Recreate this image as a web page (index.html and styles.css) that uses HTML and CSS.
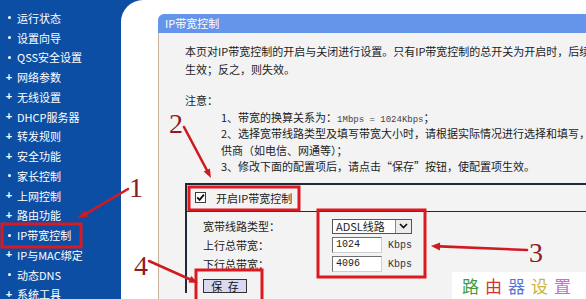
FILE: index.html
```html
<!DOCTYPE html>
<html lang="zh">
<head>
<meta charset="utf-8">
<title>IP带宽控制</title>
<link rel="stylesheet" href="styles.css">
</head>
<body>
<div class="page">
  <nav class="sidebar">
    <ul class="menu">
      <li><span class="mark dot"></span>运行状态</li>
      <li><span class="mark dot"></span>设置向导</li>
      <li><span class="mark dot"></span>QSS安全设置</li>
      <li><span class="mark plus">+</span>网络参数</li>
      <li><span class="mark plus">+</span>无线设置</li>
      <li><span class="mark plus">+</span>DHCP服务器</li>
      <li><span class="mark plus">+</span>转发规则</li>
      <li><span class="mark plus">+</span>安全功能</li>
      <li><span class="mark dot"></span>家长控制</li>
      <li><span class="mark plus">+</span>上网控制</li>
      <li><span class="mark plus">+</span>路由功能</li>
      <li><span class="mark dot"></span>IP带宽控制</li>
      <li><span class="mark plus">+</span>IP与MAC绑定</li>
      <li><span class="mark dot"></span>动态DNS</li>
      <li><span class="mark plus">+</span>系统工具</li>
    </ul>
  </nav>
  <main class="content">
    <section class="panel">
      <h1 class="panel-title">IP带宽控制</h1>
      <div class="panel-body">
        <div class="intro">
          <div class="line">本页对IP带宽控制的开启与关闭进行设置。只有IP带宽控制的总开关为开启时，后续的IP带宽控制规则才能</div>
          <div class="line">生效；反之，则失效。</div>
        </div>
        <p class="note-title">注意：</p>
        <div class="notes">
          <div class="line">1、带宽的换算关系为：<span class="small">1Mbps = 1024Kbps</span>；</div>
          <div class="line">2、选择宽带线路类型及填写带宽大小时，请根据实际情况进行选择和填写，如有疑问，请咨询您的带宽提</div>
          <div class="line">供商（如电信、网通等）；</div>
          <div class="line">3、修改下面的配置项后，请点击“保存”按钮，使配置项生效。</div>
        </div>
        <div class="form-box">
          <div class="enable-row">
            <span class="checkbox"><svg width="9" height="9" viewBox="0 0 9 9"><path d="M1.2 4.4 L3.6 6.9 L7.9 1.6" fill="none" stroke="#111" stroke-width="1.8"/></svg></span>
            <span>开启IP带宽控制</span>
          </div>
          <div class="form-grid">
            <div class="label">宽带线路类型：</div>
            <div class="ctrl">
              <div class="select"><span class="select-value">ADSL线路</span><span class="select-btn"><svg width="9" height="6" viewBox="0 0 9 6"><path d="M1 1 L4.5 4.6 L8 1" fill="none" stroke="#111" stroke-width="1.7"/></svg></span></div>
            </div>
            <div class="label">上行总带宽：</div>
            <div class="ctrl"><span class="input">1024</span><span class="unit">Kbps</span></div>
            <div class="label">下行总带宽：</div>
            <div class="ctrl"><span class="input">4096</span><span class="unit">Kbps</span></div>
          </div>
          <div class="actions"><button class="btn" type="button">保 存</button></div>
        </div>
      </div>
    </section>
  </main>

  <svg class="annotations" width="586" height="299" viewBox="0 0 586 299">
    <g fill="none" stroke="#dc1820" stroke-width="3">
      <rect x="2" y="224" width="79" height="23"/>
      <rect x="189" y="187" width="110" height="23"/>
      <rect x="318" y="210" width="107" height="67"/>
      <rect x="196" y="270" width="66" height="32"/>
    </g>
    <g stroke="#d01a22" stroke-width="2.6" stroke-linecap="round">
      <line x1="128" y1="189" x2="86.7" y2="213.4"/>
      <line x1="184" y1="127" x2="206.8" y2="170"/>
      <line x1="527" y1="250" x2="440" y2="246.4"/>
      <line x1="149" y1="261" x2="189.8" y2="279.3"/>
    </g>
    <g fill="#d01a22">
      <polygon points="77,218 88.5,216.4 84.9,210.4"/>
      <polygon points="211,178 203.7,171.6 209.9,168.4"/>
      <polygon points="431,246 440.1,242.4 439.9,250.4"/>
      <polygon points="198,283 188.4,282.5 191.2,276.1"/>
    </g>
    <g class="num" fill="#8e1c22">
      <text x="129" y="197">1</text>
      <text x="169" y="133">2</text>
      <text x="529" y="262">3</text>
      <text x="134" y="275">4</text>
    </g>
  </svg>

  <div class="watermark">
    <span class="w1">路</span><span class="w2">由</span><span class="w3">器</span><span class="w4">设</span><span class="w5">置</span>
  </div>
</div>
</body>
</html>
```

FILE: styles.css
```css
html, body {
  margin: 0;
  padding: 0;
  width: 586px;
  height: 299px;
  overflow: hidden;
}

body {
  font-family: "Noto Sans CJK SC", "Noto Sans", sans-serif;
  font-size: 11px;
  color: #1c1c1c;
}

.page {
  position: relative;
  display: flex;
  width: 586px;
  height: 299px;
  background: #0c4ea3;
}

/* sidebar */
.sidebar {
  flex: none;
  width: 121px;
}

.menu {
  list-style: none;
  margin: 0;
  padding: 8px 0 0 0;
}

.menu li {
  display: flex;
  align-items: center;
  height: 19.75px;
  padding-left: 5px;
  color: #fff;
  white-space: nowrap;
}

.mark {
  width: 8px;
  margin-right: 4px;
  display: flex;
  justify-content: center;
  align-items: center;
}

.dot::before {
  content: "";
  display: block;
  width: 3px;
  height: 3px;
  border-radius: 50%;
  background: #fff;
}

.plus {
  font-family: "Liberation Sans", sans-serif;
  font-weight: bold;
  font-size: 11px;
  line-height: 11px;
}

/* content */
.content {
  flex: 1;
  min-width: 0;
  background: #fff;
  border-top-left-radius: 22px;
  padding: 14px 0 0 37px;
  overflow: hidden;
}

.panel {
  width: 520px;
  height: 100%;
  display: flex;
  flex-direction: column;
}

.panel-title {
  margin: 0;
  height: 19px;
  line-height: 19px;
  padding-left: 7px;
  background: #6595ea;
  color: #fff;
  font-size: 11px;
  font-weight: normal;
  border-top-left-radius: 6px;
}

.panel-body {
  flex: 1;
  background: #f3f3f3;
  border-left: 1px solid #c9b49b;
  padding: 9px 0 0 26px;
}

.line {
  white-space: nowrap;
  overflow: visible;
}

.intro .line {
  height: 18px;
  line-height: 18px;
}

.note-title {
  margin: 13.5px 0 0;
  height: 17px;
  line-height: 17px;
}

.notes {
  padding-left: 36px;
}

.notes .line {
  height: 16.6px;
  line-height: 16.6px;
}

.small {
  font-family: "Liberation Mono", monospace;
  font-size: 9px;
  line-height: 10px;
  color: #444;
}

/* form box */
.form-box {
  margin-top: 8px;
  border-top: 2px solid #1f2a38;
  border-left: 2px solid #1f2a38;
}

.enable-row {
  display: flex;
  align-items: center;
  height: 26px;
  padding-left: 8px;
  border-bottom: 1px solid #1f2a38;
}

.checkbox {
  box-sizing: border-box;
  width: 11px;
  height: 11px;
  margin-right: 10px;
  border: 1px solid #3c3c3c;
  background: #fff;
  display: flex;
  align-items: center;
  justify-content: center;
}

.form-grid {
  display: grid;
  grid-template-columns: 129px auto;
  grid-auto-rows: 19px;
  align-items: center;
  padding: 5px 0 0 16px;
}

.label {
  line-height: 19px;
}

.ctrl {
  display: flex;
  align-items: center;
}

.select {
  box-sizing: border-box;
  width: 80px;
  height: 15px;
  border: 1px solid #555;
  background: #fff;
  display: flex;
}

.select-value {
  flex: 1;
  padding-left: 3px;
  line-height: 13px;
  white-space: nowrap;
}

.select-btn {
  width: 15px;
  border-left: 1px solid #8a8a8a;
  background: #ececec;
  display: flex;
  align-items: center;
  justify-content: center;
}

.input {
  box-sizing: border-box;
  width: 50px;
  height: 16px;
  padding-left: 3px;
  line-height: 14px;
  background: #fff;
  border: 1px solid;
  border-color: #6f6f6f #cfcfcf #cfcfcf #6f6f6f;
  font-family: "Liberation Mono", monospace;
  font-size: 10px;
}

.unit {
  margin-left: 6px;
  font-family: "Liberation Mono", monospace;
  font-size: 10px;
  color: #333;
}

.actions {
  padding: 5px 0 0 16px;
  height: 14px;
}

.btn {
  display: block;
  box-sizing: border-box;
  width: 44px;
  height: 14px;
  padding: 0;
  border: 1px solid #333;
  background: #d9d9f1;
  font-family: inherit;
  font-size: 11px;
  line-height: 12px;
  color: #111;
  white-space: pre;
  word-spacing: 3px;
}

/* annotation overlay */
.annotations {
  position: absolute;
  left: 0;
  top: 0;
  pointer-events: none;
}

.num text {
  font-family: "Liberation Serif", serif;
  font-size: 28px;
}

.watermark {
  position: absolute;
  left: 452px;
  top: 272px;
  width: 134px;
  height: 27px;
  background: #fff;
  display: flex;
  align-items: center;
  gap: 6px;
  padding-left: 10px;
  box-sizing: border-box;
  font-size: 17px;
  line-height: 20px;
}

.w1 { color: #3f9b3c; }
.w2 { color: #d53333; }
.w3 { color: #5873d6; }
.w4 { color: #c9b23f; }
.w5 { color: #d366d8; }
```
